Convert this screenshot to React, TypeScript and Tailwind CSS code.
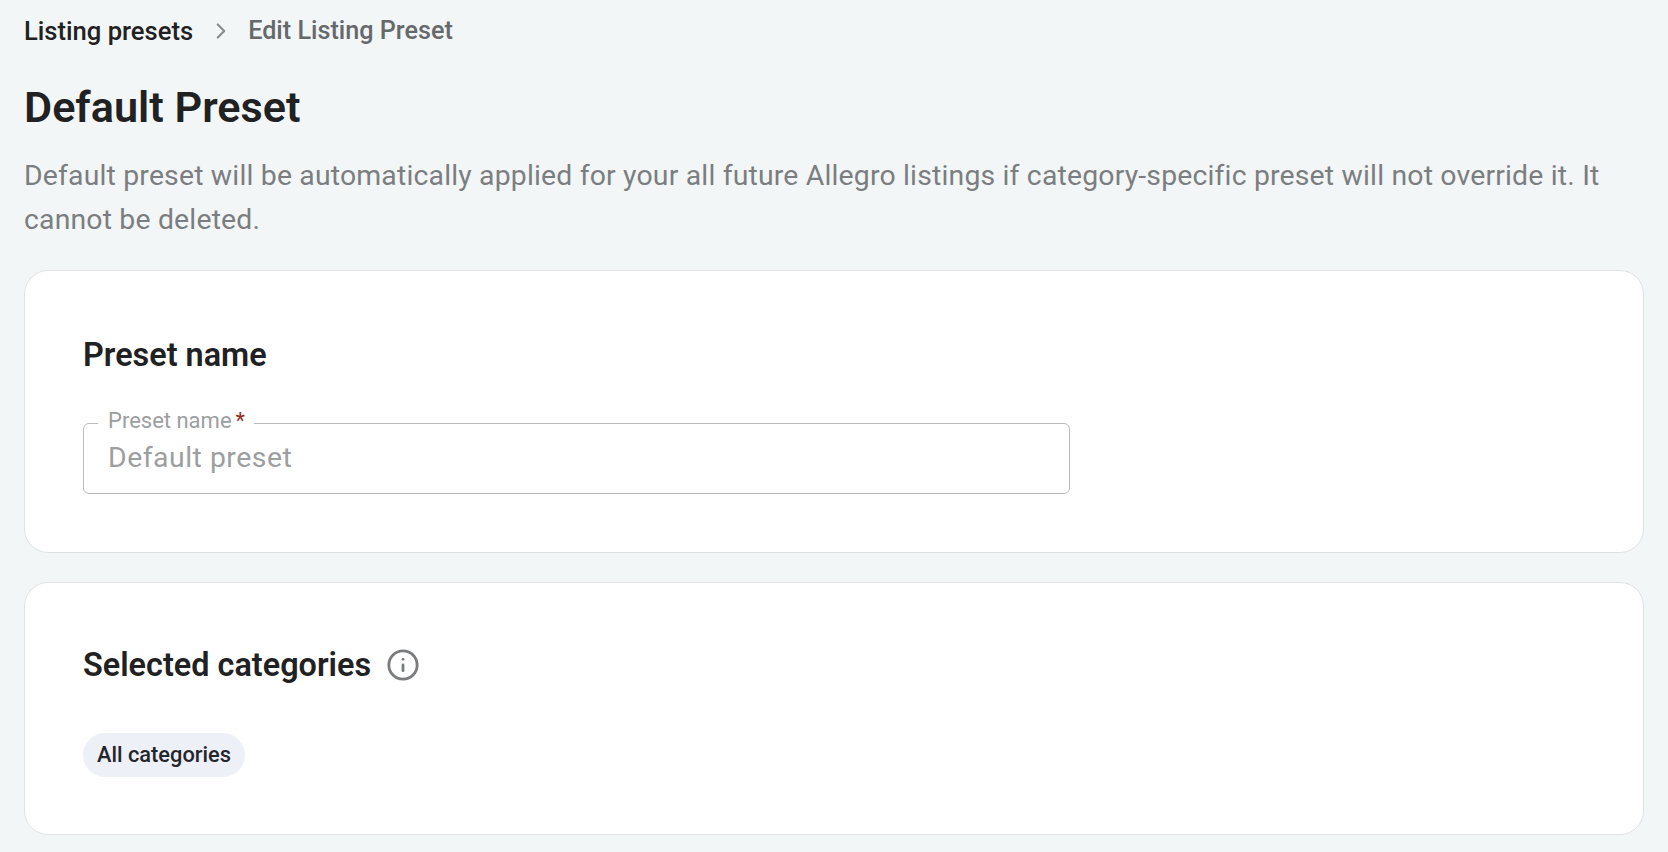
import { Info, ChevronRight } from "lucide-react";

function Card({ className, children }: { className: string; children: React.ReactNode }) {
  return (
    <section className={`bg-white border border-[#e0e2e5] rounded-[24px] px-[58px] ${className}`}>
      {children}
    </section>
  );
}

export default function App() {
  return (
    <div className="h-[852px] overflow-hidden bg-[#f3f6f7] px-6 pt-[16px] font-['Roboto',sans-serif] text-[#1f2122]">
      <nav className="flex items-center h-[30px] font-medium">
        <span className="text-[25.6px] text-[#1f2122]">Listing presets</span>
        <ChevronRight size={26} strokeWidth={2} className="ml-[15px] mr-[14px] text-[#8a8d90]" />
        <span className="text-[25.2px] text-[#66696c]">Edit Listing Preset</span>
      </nav>

      <h1 className="mt-[35px] text-[43.2px] leading-[54px] font-semibold">Default Preset</h1>

      <p className="mt-[19px] text-[28.4px] leading-[44px] text-[#7b7e80] tracking-[0.17px]">
        Default preset will be automatically applied for your all future Allegro listings if category-specific preset will not override it. It cannot be deleted.
      </p>

      <Card className="mt-[28px] h-[283px] pt-[65px]">
        <h2 className="text-[32.4px] leading-[38px] font-semibold">Preset name</h2>
        <div className="relative mt-[49px] w-[987px] h-[71px] border border-[#b8babc] rounded-[6px] flex items-center px-[24px]">
          <span className="absolute -top-[17px] left-[14px] bg-white pl-[10px] pr-[9px] text-[22px] leading-[28px] text-[#9c9ea0] flex gap-[4px]">
            Preset name
            <span className="text-[#9c2a1f]">*</span>
          </span>
          <span className="text-[28.4px] text-[#9c9ea0] tracking-[0.5px]">Default preset</span>
        </div>
      </Card>

      <Card className="mt-[29px] h-[253px] pt-[63px]">
        <div className="flex items-center gap-[15px]">
          <h2 className="text-[32.4px] leading-[38px] font-semibold">Selected categories</h2>
          <Info size={34} strokeWidth={2} className="text-[#7a7c7e]" />
        </div>
        <div className="mt-[49px] inline-flex items-center h-[44px] rounded-full bg-[#edf0f7] px-[14px] text-[21.8px] font-medium text-[#24262b]">
          All categories
        </div>
      </Card>
    </div>
  );
}
